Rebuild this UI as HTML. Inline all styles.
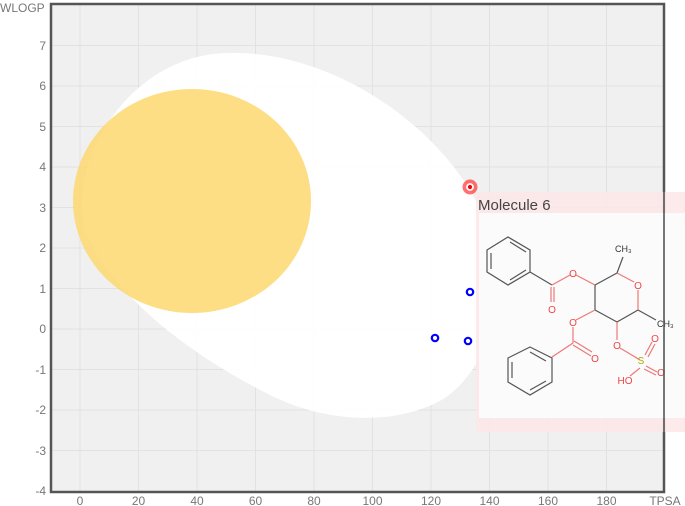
<!DOCTYPE html>
<html><head><meta charset="utf-8"><style>
html,body{margin:0;padding:0;background:#fff;width:685px;height:506px;overflow:hidden;font-family:"Liberation Sans",sans-serif;}
</style></head><body>
<svg width="685" height="506" xmlns="http://www.w3.org/2000/svg" style="position:absolute;left:0;top:0">
<rect x="51" y="4" width="613" height="488" fill="#f0f0f0"/>
<g stroke="#e2e2e2" stroke-width="1">
<line x1="80" y1="4" x2="80" y2="492"/><line x1="138.5" y1="4" x2="138.5" y2="492"/><line x1="197" y1="4" x2="197" y2="492"/><line x1="255.5" y1="4" x2="255.5" y2="492"/><line x1="314" y1="4" x2="314" y2="492"/><line x1="372.5" y1="4" x2="372.5" y2="492"/><line x1="431" y1="4" x2="431" y2="492"/><line x1="489.5" y1="4" x2="489.5" y2="492"/><line x1="548" y1="4" x2="548" y2="492"/><line x1="606.5" y1="4" x2="606.5" y2="492"/>
<line x1="51" y1="45.5" x2="664" y2="45.5"/><line x1="51" y1="86" x2="664" y2="86"/><line x1="51" y1="126.5" x2="664" y2="126.5"/><line x1="51" y1="167" x2="664" y2="167"/><line x1="51" y1="207.5" x2="664" y2="207.5"/><line x1="51" y1="248" x2="664" y2="248"/><line x1="51" y1="288.5" x2="664" y2="288.5"/><line x1="51" y1="329" x2="664" y2="329"/><line x1="51" y1="369.5" x2="664" y2="369.5"/><line x1="51" y1="410" x2="664" y2="410"/><line x1="51" y1="450.5" x2="664" y2="450.5"/>
</g>
<path d="M227,53 C320,50 420,110 470,190 C510,260 505,355 445,398 C400,425 330,425 270,395 C180,350 110,290 86,232 C66,160 130,55 227,53 Z" fill="#fff" fill-opacity="0.95"/>
<ellipse cx="192" cy="201" rx="119" ry="112" fill="#fdd870" fill-opacity="0.85"/>
<rect x="51" y="4" width="613" height="488" fill="none" stroke="#555" stroke-width="2.5"/>
<g font-size="12" fill="#777" text-anchor="end">
<text x="46" y="50">7</text><text x="46" y="90">6</text><text x="46" y="131">5</text><text x="46" y="171">4</text><text x="46" y="212">3</text><text x="46" y="252">2</text><text x="46" y="293">1</text><text x="46" y="333">0</text><text x="46" y="374">-1</text><text x="46" y="414">-2</text><text x="46" y="455">-3</text><text x="46" y="495">-4</text>
</g>
<text x="0" y="12" font-size="12" fill="#777">WLOGP</text>
<g font-size="12" fill="#777" text-anchor="middle">
<text x="80" y="505">0</text><text x="138.5" y="505">20</text><text x="197" y="505">40</text><text x="255.5" y="505">60</text><text x="314" y="505">80</text><text x="372.5" y="505">100</text><text x="431" y="505">120</text><text x="489.5" y="505">140</text><text x="548" y="505">160</text><text x="606.5" y="505">180</text><text x="665" y="505">TPSA</text>
</g>
<circle cx="470" cy="187" r="7.5" fill="#f33" fill-opacity="0.7"/>
<circle cx="470" cy="187" r="3" fill="#f00" stroke="#fff" stroke-width="1.8"/>
<g fill="none" stroke="#00f" stroke-width="2.2">
<circle cx="470" cy="292" r="3.2"/><circle cx="435" cy="338" r="3.2"/><circle cx="468" cy="341" r="3.2"/>
</g>
<rect x="476" y="192" width="215" height="240" fill="#fde8e8" fill-opacity="0.85"/>
<rect x="479" y="213" width="210" height="205" fill="#fbfbfb"/>
<text x="478" y="210" font-size="15" fill="#444">Molecule 6</text>
<g stroke="#555" stroke-width="1.2" fill="none">
<polygon points="487,250 508,237 530,250 530,272 508,285 487,272"/>
<line x1="491" y1="253" x2="491" y2="269"/><line x1="510" y1="242" x2="526" y2="252"/><line x1="510" y1="280" x2="526" y2="270"/>
<line x1="530" y1="272" x2="552" y2="285"/>
<polygon points="508,358 530,347 552,358 552,382 530,395 508,382"/>
<line x1="512" y1="362" x2="512" y2="378"/><line x1="530" y1="352" x2="546" y2="361"/><line x1="530" y1="390" x2="546" y2="381"/>
<line x1="595" y1="285" x2="617" y2="273"/><line x1="617" y1="273" x2="623" y2="257"/>
<line x1="595" y1="285" x2="595" y2="310"/><line x1="595" y1="310" x2="617" y2="322"/>
<line x1="617" y1="322" x2="638" y2="310"/><line x1="638" y1="310" x2="656" y2="320"/>
</g>
<g stroke="#e77" stroke-width="1.2" fill="none">
<line x1="552" y1="285" x2="570" y2="275"/><line x1="576" y1="275" x2="595" y2="285"/>
<line x1="551" y1="287" x2="551" y2="302"/><line x1="554" y1="287" x2="554" y2="302"/>
<line x1="617" y1="273" x2="634" y2="282"/><line x1="638" y1="290" x2="638" y2="310"/>
<line x1="595" y1="310" x2="576" y2="320"/><line x1="573" y1="327" x2="573" y2="343"/>
<line x1="573" y1="343" x2="552" y2="357"/><line x1="574" y1="341" x2="592" y2="352"/><line x1="573" y1="345" x2="591" y2="356"/>
<line x1="617" y1="322" x2="617" y2="340"/><line x1="620" y1="348" x2="640" y2="360"/>
<line x1="645" y1="355" x2="652" y2="342"/><line x1="648" y1="357" x2="655" y2="344"/>
<line x1="646" y1="366" x2="657" y2="372"/><line x1="644" y1="369" x2="656" y2="375"/>
<line x1="640" y1="368" x2="630" y2="376"/>
</g>
<g font-size="10" fill="#e44" text-anchor="middle">
<text x="573" y="277">O</text><text x="552" y="313">O</text><text x="638" y="289">O</text><text x="573" y="326">O</text><text x="595" y="362">O</text><text x="617" y="349">O</text><text x="655" y="342">O</text><text x="661" y="376">O</text><text x="625" y="384">HO</text>
</g>
<text x="641" y="364" font-size="10" fill="#aa0" text-anchor="middle">S</text>
<g font-size="9" fill="#333"><text x="615" y="252">CH₃</text><text x="657" y="327">CH₃</text></g>
<line x1="664" y1="192" x2="664" y2="432" stroke="#555" stroke-width="2" stroke-opacity="0.8"/>
</svg>
</body></html>
